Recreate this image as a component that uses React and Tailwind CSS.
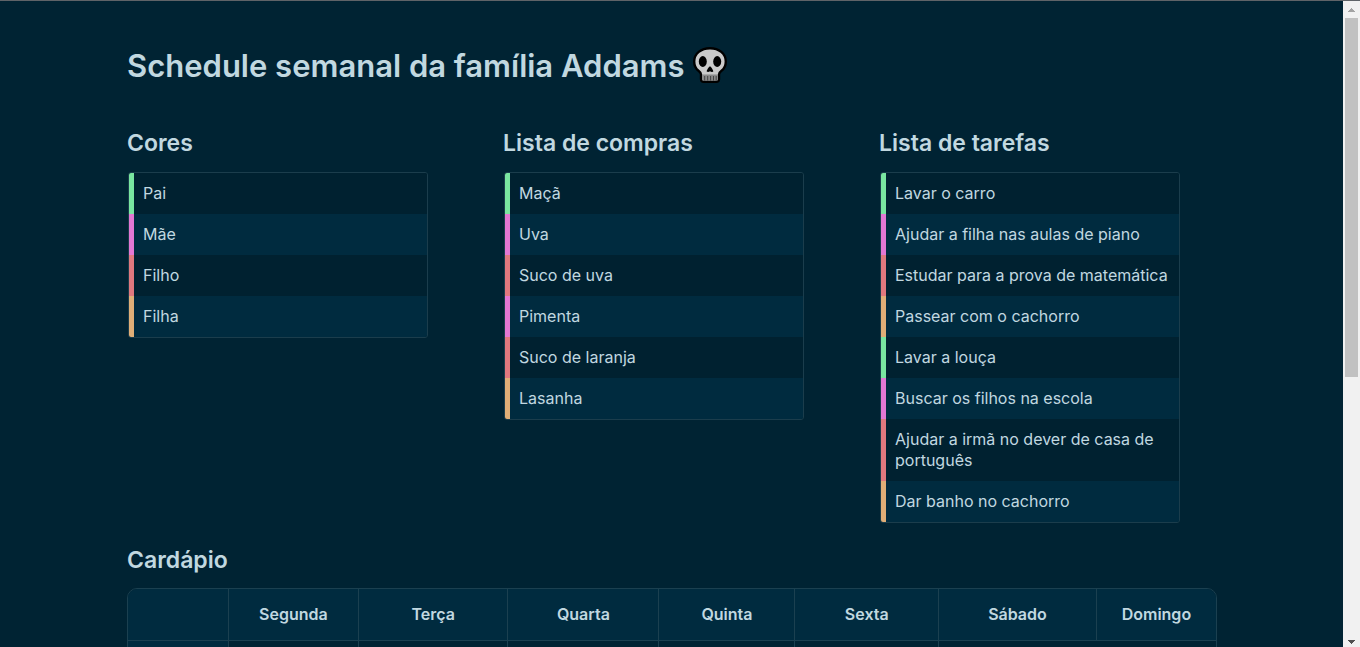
const stripe = {
  pai: "border-l-[#79e6a0]",
  mae: "border-l-[#e377d3]",
  filho: "border-l-[#e0787e]",
  filha: "border-l-[#e0ae77]",
};

const lists = [
  {
    title: "Cores",
    items: [
      ["Pai", "pai"],
      ["Mãe", "mae"],
      ["Filho", "filho"],
      ["Filha", "filha"],
    ],
  },
  {
    title: "Lista de compras",
    items: [
      ["Maçã", "pai"],
      ["Uva", "mae"],
      ["Suco de uva", "filho"],
      ["Pimenta", "mae"],
      ["Suco de laranja", "filho"],
      ["Lasanha", "filha"],
    ],
  },
  {
    title: "Lista de tarefas",
    items: [
      ["Lavar o carro", "pai"],
      ["Ajudar a filha nas aulas de piano", "mae"],
      ["Estudar para a prova de matemática", "filho"],
      ["Passear com o cachorro", "filha"],
      ["Lavar a louça", "pai"],
      ["Buscar os filhos na escola", "mae"],
      ["Ajudar a irmã no dever de casa de português", "filho"],
      ["Dar banho no cachorro", "filha"],
    ],
  },
];

const days = [
  ["Segunda", "w-[12%]"],
  ["Terça", "w-[13.7%]"],
  ["Quarta", "w-[13.9%]"],
  ["Quinta", "w-[12.5%]"],
  ["Sexta", "w-[13.2%]"],
  ["Sábado", "w-[14.5%]"],
  ["Domingo", "w-[11%]"],
];

function Skull() {
  return (
    <svg viewBox="0 0 34 36" className="mb-0.5 h-9 w-[34px]" role="img" aria-label="Caveira">
      <path
        d="M17 1.2C8 1.2 1.2 6.600 1.2 14.500c0 4.300 1.500 7.200 4.300 9.200 1.600 1.200 2.500 2 2.500 3.800v4.500c0 1.700 1 2.800 2.700 2.800h12.600c1.700 0 2.700-1.100 2.700-2.800v-4.500c0-1.800.9-2.600 2.500-3.800 2.800-2 4.300-4.900 4.300-9.200C32.800 6.600 26 1.200 17 1.200Z"
        fill="#cacaca"
        stroke="#000"
        strokeWidth="2.400"
      />
      <path d="M9.200 27.500h15.600v5c0 .8-.3 1.100-1 1.100H10.200c-.7 0-1-.3-1-1.100Z" fill="#8a8a8a" />
      <path d="M11.700 29v4.600M14.700 29v4.600M17.600 29v4.600M20.500 29v4.600M23.200 29v4.600" stroke="#444" strokeWidth="1" />
      <ellipse cx="9.800" cy="14.500" rx="4" ry="5.400" />
      <ellipse cx="24.200" cy="14.500" rx="4" ry="5.400" />
      <path d="M17 19.200c.8 0 3.300 4 3.300 4.900s-1 1-1.700.8c-.6-.2-1-.4-1.600-.4s-1 .2-1.600.4c-.7.2-1.700.1-1.700-.8s2.500-4.900 3.300-4.900Z" />
    </svg>
  );
}

function ColorList({ title, items }) {
  return (
    <section className="w-[301px] shrink-0">
      <h2 className="text-[23px] leading-[34px] font-semibold">{title}</h2>
      <ul className="mt-3 ml-px overflow-hidden rounded-[3px] border border-[#1b3d4c]">
        {items.map(([text, who]) => (
          <li
            key={text}
            className={`border-l-[5px] py-2.5 pr-2 pl-[9px] leading-[21px] odd:bg-[#002130] even:bg-[#002b3f] ${stripe[who]}`}
          >
            {text}
          </li>
        ))}
      </ul>
    </section>
  );
}

function Scrollbar() {
  return (
    <div aria-hidden="true" className="flex w-[17px] shrink-0 flex-col items-center bg-[#f1f1f1]">
      <svg viewBox="0 0 17 17" className="size-[17px] shrink-0" fill="#a3a3a3" shapeRendering="crispEdges">
        <path d="M8 7h1v1h1v1h1v1h1v1H5v-1h1V9h1V8h1Z" />
      </svg>
      <div className="h-[359px] w-[13px] bg-[#c1c1c1]" />
      <svg viewBox="0 0 17 17" className="mt-auto size-[17px] shrink-0" fill="#505050" shapeRendering="crispEdges">
        <path d="M5 10h7v1h-1v1h-1v1H9v1H8v-1H7v-1H6v-1H5Z" />
      </svg>
    </div>
  );
}

export default function App() {
  return (
    <div className="flex h-screen overflow-hidden border-t border-[#5f6368] bg-[#002333] font-[Inter,sans-serif] text-base text-[#c1d8e0]">
      <main className="min-w-0 flex-1 overflow-hidden pt-[41px] pr-[126px] pl-[127px]">
        <h1 className="flex items-center gap-2 text-[31px] leading-[48px] font-semibold">
          Schedule semanal da família Addams
          <Skull />
        </h1>
        <div className="mt-9 flex flex-wrap gap-x-[75px] gap-y-5">
          {lists.map((list) => (
            <ColorList key={list.title} {...list} />
          ))}
        </div>
        <section className="mt-5">
          <h2 className="text-[23px] leading-[34px] font-semibold">Cardápio</h2>
          <div className="mt-[11px] overflow-hidden rounded-[10px] border border-[#1b4050]">
            <table aria-label="Cardápio" className="w-full table-fixed border-collapse">
              <thead>
                <tr className="h-[51px] bg-[#002b3f]">
                  <td />
                  {days.map(([day, width]) => (
                    <th key={day} scope="col" className={`border-l border-[#1b4050] font-semibold ${width}`}>
                      {day}
                    </th>
                  ))}
                </tr>
              </thead>
              <tbody>
                <tr className="h-[52px] border-t border-[#1b4050]">
                  <td className="bg-[#002b3f]" />
                  <td className="border-l border-[#1b4050]" />
                  <td className="border-l border-[#1b4050]" />
                  <td className="border-l border-[#1b4050]" />
                  <td className="border-l border-[#1b4050]" />
                  <td className="border-l border-[#1b4050]" />
                  <td colSpan={2} className="border-l border-[#1b4050]" />
                </tr>
              </tbody>
            </table>
          </div>
        </section>
      </main>
      <Scrollbar />
    </div>
  );
}
